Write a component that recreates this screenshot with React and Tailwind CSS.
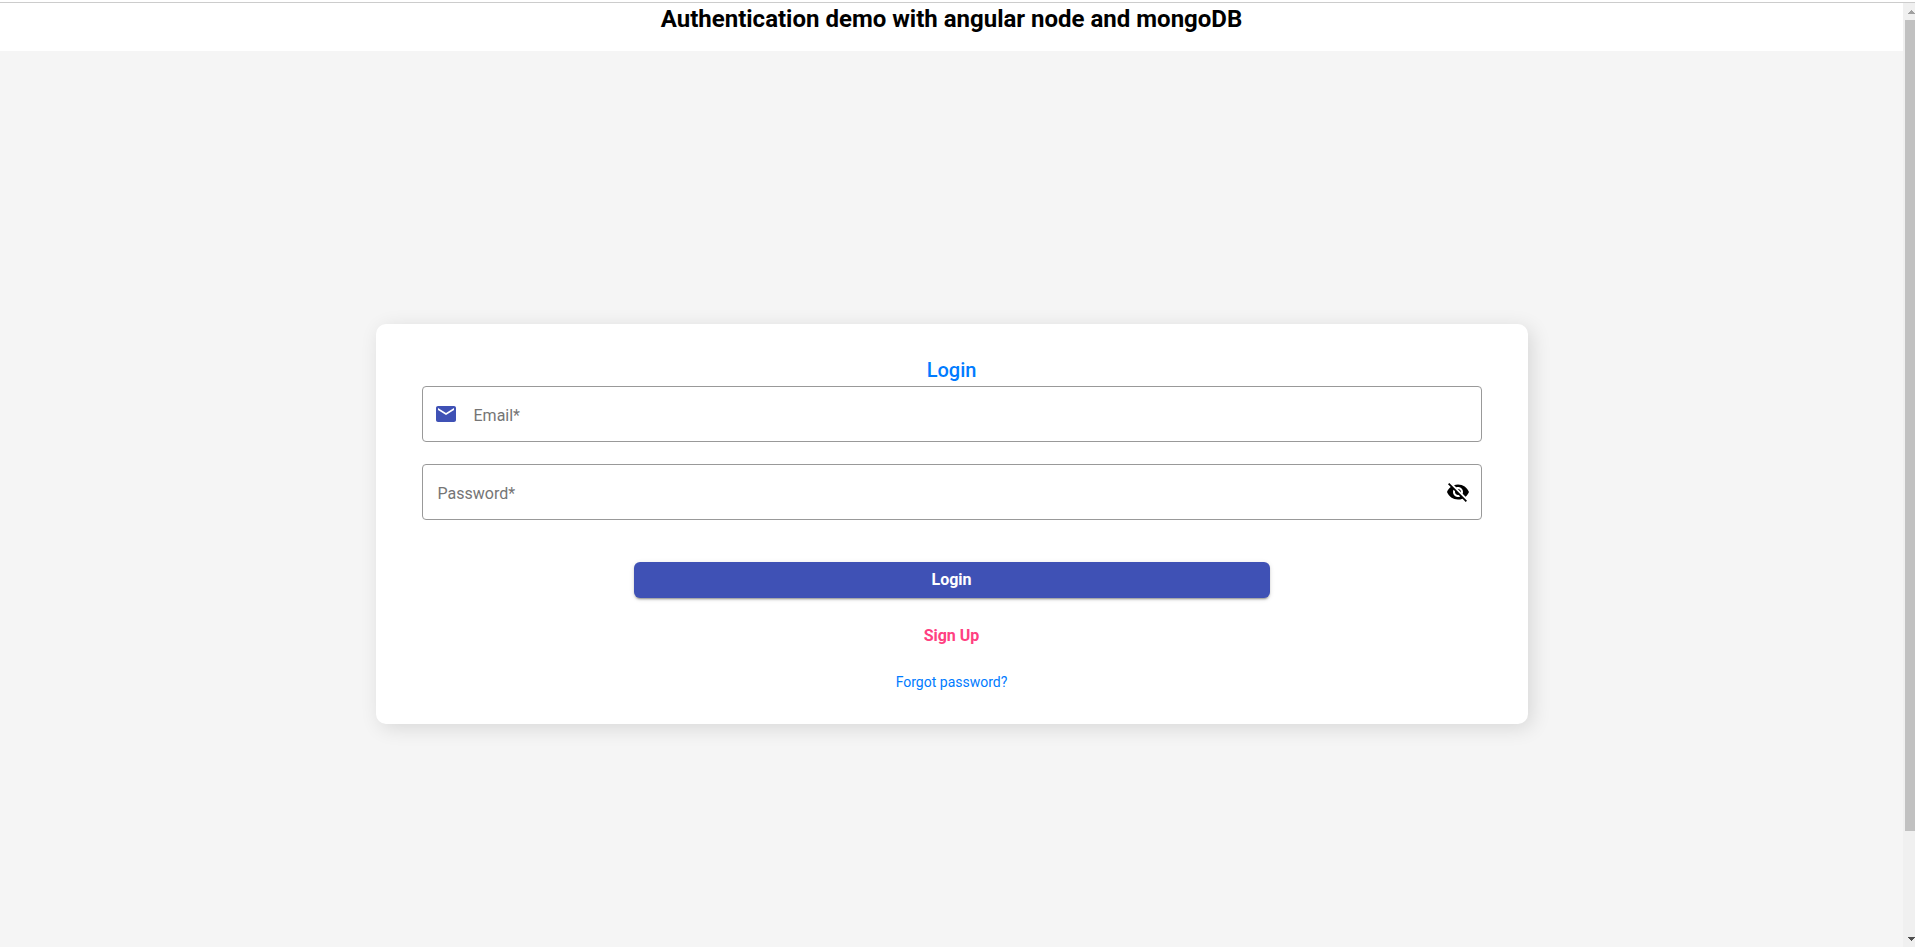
import { useState } from "react";

function MailIcon() {
  return (
    <svg viewBox="0 0 24 24" className="size-6 fill-[#3f51b5]" aria-hidden="true">
      <path d="M20 4H4c-1.1 0-1.99.9-1.99 2L2 18c0 1.1.9 2 2 2h16c1.1 0 2-.9 2-2V6c0-1.1-.9-2-2-2zm0 4l-8 5-8-5V6l8 5 8-5v2z" />
    </svg>
  );
}

function VisibilityOffIcon() {
  return (
    <svg viewBox="0 0 24 24" className="size-6 fill-black" aria-hidden="true">
      <path d="M12 7c2.76 0 5 2.24 5 5 0 .65-.13 1.26-.36 1.83l2.92 2.92c1.51-1.26 2.7-2.89 3.43-4.75-1.73-4.39-6-7.5-11-7.5-1.4 0-2.74.25-3.98.7l2.16 2.16C10.74 7.13 11.35 7 12 7zM2 4.27l2.28 2.28.46.46C3.08 8.3 1.78 10.02 1 12c1.73 4.39 6 7.5 11 7.5 1.55 0 3.03-.3 4.38-.84l.42.42L19.73 22 21 20.73 3.27 3 2 4.27zM7.53 9.8l1.55 1.55c-.05.21-.08.43-.08.65 0 1.66 1.34 3 3 3 .22 0 .44-.03.65-.08l1.55 1.55c-.67.33-1.41.53-2.2.53-2.76 0-5-2.24-5-5 0-.79.2-1.53.53-2.2zm4.31-.78l3.15 3.15.02-.16c0-1.66-1.34-3-3-3l-.17.01z" />
    </svg>
  );
}

function Scrollbar() {
  return (
    <div className="flex w-3 shrink-0 flex-col overflow-hidden bg-[#f0f0f0] pt-[7px] pb-[6px]" aria-hidden="true">
      <svg viewBox="0 0 7 4" className="ml-[5px] h-1 w-[7px] shrink-0 fill-[#a0a0a0]">
        <path d="M0 4V3h1V2h1V1h1V0h1v1h1v1h1v1h1v1z" />
      </svg>
      <div className="mt-[6px] mb-[6px] flex grow flex-col pl-[2px]">
        <div className="h-[89%] bg-[#c1c1c1]" />
      </div>
      <svg viewBox="0 0 7 4" className="ml-[5px] h-1 w-[7px] shrink-0 fill-[#505050]">
        <path d="M0 0h7v1H6v1H5v1H4v1H3V3H2V2H1V1H0z" />
      </svg>
    </div>
  );
}

export default function App() {
  const [email, setEmail] = useState("");
  const [password, setPassword] = useState("");
  const [visible, setVisible] = useState(false);

  return (
    <div className="flex h-screen flex-col overflow-hidden bg-white pt-[2px] font-['Roboto',sans-serif]">
      <div className="flex min-h-0 grow border-t border-[#cccccc]">
        <div className="min-w-0 grow overflow-hidden">
          <header className="h-12">
            <h1 className="text-center text-2xl leading-8 font-bold text-black">
              Authentication demo with angular node and mongoDB
            </h1>
          </header>
          <main className="flex h-screen items-center justify-center bg-[#f5f5f5] pb-px">
            <form
              className="flex h-[400px] w-full max-w-6xl flex-col items-center rounded-[10px] bg-white px-[46px] pt-[30px] shadow-[4px_4px_20px_rgba(0,0,0,0.12)]"
              onSubmit={(e) => e.preventDefault()}
            >
              <h2 className="text-xl leading-8 font-medium text-[#007bff]">Login</h2>

              <div className="flex h-14 w-full items-center rounded border border-[#999999] pr-4 pl-[11px]">
                <MailIcon />
                <label htmlFor="email" className="pt-1 pl-4 text-base text-[#757575]">
                  Email*
                </label>
                <input
                  id="email"
                  type="email"
                  required
                  value={email}
                  onChange={(e) => setEmail(e.target.value)}
                  className="h-full min-w-0 grow bg-transparent pl-3 outline-none"
                />
              </div>

              <div className="mt-[22px] flex h-14 w-full items-center rounded border border-[#999999] pr-[11px] pl-[15px]">
                <label htmlFor="password" className="pt-1 text-base text-[#757575]">
                  Password*
                </label>
                <input
                  id="password"
                  type={visible ? "text" : "password"}
                  required
                  value={password}
                  onChange={(e) => setPassword(e.target.value)}
                  className="h-full min-w-0 grow bg-transparent pl-3 outline-none"
                />
                <button type="button" aria-label="Toggle password visibility" onClick={() => setVisible(!visible)}>
                  <VisibilityOffIcon />
                </button>
              </div>

              <button
                type="submit"
                className="mt-[42px] h-9 w-3/5 rounded-md bg-[#3f51b5] text-base font-bold text-white shadow-[0_3px_1px_-2px_rgba(0,0,0,0.2),0_2px_2px_0_rgba(0,0,0,0.14),0_1px_5px_0_rgba(0,0,0,0.12)]"
              >
                Login
              </button>
              <button type="button" className="mt-5 h-9 px-4 text-base font-bold text-[#ff4081]">
                Sign Up
              </button>
              <a href="#forgot" className="mt-4 text-sm leading-6 text-[#007bff]">
                Forgot password?
              </a>
            </form>
          </main>
        </div>
        <Scrollbar />
      </div>
    </div>
  );
}
